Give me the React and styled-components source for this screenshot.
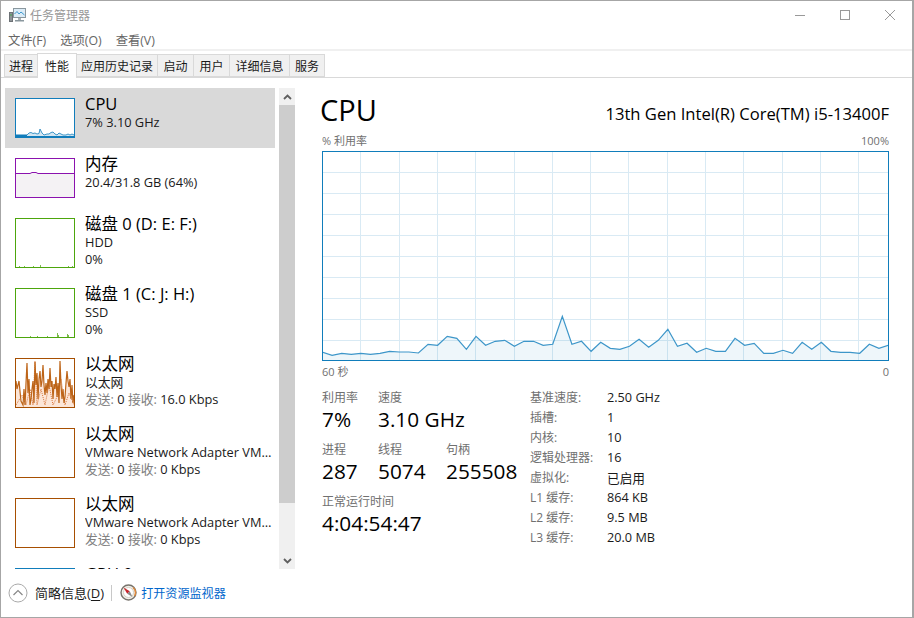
import React from 'react'
import styled, { createGlobalStyle } from 'styled-components'

const FONT = '"Open Sans", "Noto Sans CJK SC", sans-serif'

const GlobalStyle = createGlobalStyle`
    html, body {
        margin: 0;
        padding: 0;
        background: #fff;
    }
    * {
        box-sizing: border-box;
    }
`

const Window = styled.div`
    width: 914px;
    height: 618px;
    border: 1px solid #a6a6a6;
    border-right-width: 2px;
    background: #fff;
    font-family: ${FONT};
    font-size: 12px;
    color: #1a1a1a;
    display: flex;
    flex-direction: column;
    overflow: hidden;
`

const TitleBar = styled.div`
    height: 29px;
    flex: none;
    display: flex;
    align-items: center;
    padding: 0 0 1px 8px;
    gap: 4px;
`

const TitleText = styled.span`
    color: #999;
    font-size: 12px;
    margin-bottom: 1px;
`

const WindowButtons = styled.div`
    margin-left: auto;
    display: flex;
    align-items: center;
    height: 100%;
`

const WindowButton = styled.div`
    width: 45px;
    height: 100%;
    display: flex;
    align-items: center;
    justify-content: center;
    color: #999;
`

const MenuBar = styled.div`
    height: 19px;
    flex: none;
    display: flex;
    align-items: center;
    padding-left: 7px;
    gap: 14px;
`

const MenuItem = styled.span`
    color: #666;
    font-size: 12.3px;
`

const Separator = styled.div`
    height: 2px;
    flex: none;
    background: #f0f0f0;
`

const TabBar = styled.div`
    height: 27px;
    flex: none;
    display: flex;
    align-items: flex-end;
    padding-left: 3px;
    border-bottom: 1px solid #d9d9d9;
`

const Tab = styled.div`
    width: ${p => p.$w}px;
    height: ${p => (p.$active ? '25px' : '23px')};
    margin-bottom: ${p => (p.$active ? '-1px' : '0')};
    margin-left: -1px;
    border: 1px solid #d9d9d9;
    border-bottom: ${p => (p.$active ? '0' : '1px solid #d9d9d9')};
    background: ${p => (p.$active ? '#fff' : '#f0f0f0')};
    position: relative;
    z-index: ${p => (p.$active ? 1 : 0)};
    display: flex;
    align-items: center;
    justify-content: center;
    font-size: 12px;
    color: #1a1a1a;
    &:first-child {
        margin-left: 0;
    }
`

const Body = styled.div`
    flex: 1;
    min-height: 0;
    display: flex;
`

const SideColumn = styled.div`
    width: 294px;
    flex: none;
    display: flex;
    gap: 4px;
    padding: 10px 0 1px 4px;
`

const SideList = styled.div`
    width: 270px;
    flex: none;
    overflow: hidden;
`

const SideItem = styled.div`
    display: flex;
    gap: 10px;
    padding: 10px 2px 10px 10px;
    background: ${p => (p.$selected ? '#d9d9d9' : 'transparent')};
`

const Thumb = styled.div`
    width: 60px;
    height: ${p => p.$h}px;
    flex: none;
    border: 1px solid ${p => p.$color};
    background: #fff;
    overflow: hidden;
    svg {
        display: block;
    }
`

const ItemText = styled.div`
    flex: 1;
    min-width: 0;
    margin-top: -4px;
`

const ItemTitle = styled.div`
    font-size: 16.5px;
    line-height: 20px;
    color: #000;
    white-space: nowrap;
`

const ItemLine = styled.div`
    font-size: 12.8px;
    line-height: 17px;
    color: #1a1a1a;
    white-space: nowrap;
    overflow: hidden;
    text-overflow: ellipsis;
`

const Muted = styled.span`
    color: #808080;
`

const ScrollBar = styled.div`
    width: 16px;
    flex: none;
    background: #f0f0f0;
    display: flex;
    flex-direction: column;
`

const ScrollArrow = styled.div`
    height: 17px;
    flex: none;
    display: flex;
    align-items: center;
    justify-content: center;
    margin-top: ${p => (p.$bottom ? 'auto' : '0')};
`

const ScrollThumb = styled.div`
    height: 398px;
    flex: none;
    background: #cdcdcd;
`

const Main = styled.div`
    width: 567px;
    margin-left: 27px;
    padding-top: 14px;
    flex: none;
`

const Heading = styled.div`
    height: 40px;
    display: flex;
    align-items: flex-start;
    justify-content: space-between;
`

const HeadingTitle = styled.div`
    font-size: 29px;
    line-height: 36px;
    color: #000;
    margin-left: -2px;
`

const CpuName = styled.div`
    font-size: 16.6px;
    line-height: 20px;
    margin-top: 12px;
    color: #000;
`

const AxisRow = styled.div`
    display: flex;
    justify-content: space-between;
    font-size: 11px;
    line-height: 17px;
    color: #707070;
`

const ChartBox = styled.div`
    width: 567px;
    height: 210px;
    margin: 2px 0 2px;
    border: 1px solid #117dbb;
    svg {
        display: block;
    }
`

const Details = styled.div`
    display: flex;
    margin-top: 9px;
`

const StatColumn = styled.div`
    width: 208px;
    flex: none;
`

const StatRow = styled.div`
    display: flex;
    height: 52px;
`

const Stat = styled.div`
    width: ${p => p.$w || 68}px;
    flex: none;
    white-space: nowrap;
`

const StatLabel = styled.div`
    font-size: 12px;
    line-height: 17px;
    color: #707070;
`

const StatValue = styled.div`
    font-size: 20.8px;
    line-height: 26px;
    color: #000;
`

const SpecGrid = styled.div`
    display: grid;
    grid-template-columns: 77px auto;
    grid-auto-rows: 20px;
    align-content: start;
    align-items: center;
    margin-top: -2px;
`

const SpecLabel = styled.div`
    font-size: 12px;
    color: #707070;
`

const SpecValue = styled.div`
    font-size: 12.7px;
    color: #1a1a1a;
`

const Footer = styled.div`
    height: 47px;
    flex: none;
    display: flex;
    align-items: center;
    padding: 0 0 2px 7px;
`

const Fewer = styled.span`
    font-size: 13px;
    color: #1a1a1a;
    margin-left: 7px;
    u {
        text-underline-offset: 2px;
    }
`

const FooterDivider = styled.div`
    width: 1px;
    height: 16px;
    background: #c8c8c8;
    margin: 0 8px 0 7px;
`

const MonitorLink = styled.a`
    font-size: 12.1px;
    color: #0066cc;
    margin-left: 4px;
`

const cpuChartZ = [
    187, 196, 190, 193, 190, 193, 190, 184, 186, 186, 189, 163, 166, 139, 145, 178, 139, 166, 154, 151,
    169, 154, 154, 166, 163, 79, 163, 154, 184, 157, 175, 178, 169, 148, 172, 151, 118, 169, 160, 187,
    175, 184, 184, 145, 166, 160, 190, 190, 181, 190, 157, 178, 157, 184, 187, 187, 190, 163, 175, 166,
]

const cpuPoints = cpuChartZ
    .map((z, i) => `${(i * 566) / 59 + 0.5},${(290 + z / 3 - 151).toFixed(1)}`)
    .join(' ')

const CpuChart = () => (
    <svg width="565" height="208" viewBox="1 1 565 208">
        {[...Array(14)].map((_, i) => {
            const x = Math.round(38.3 * (i + 1)) + 0.5
            return <line key={i} x1={x} x2={x} y1="0" y2="210" stroke="#d9eaf4" />
        })}
        {[...Array(9)].map((_, i) => {
            const y = 21 * (i + 1) + 0.5
            return <line key={i} x1="0" x2="567" y1={y} y2={y} stroke="#d9eaf4" />
        })}
        <polygon points={`0.5,210 ${cpuPoints} 566.5,210`} fill="#117dbb" fillOpacity="0.07" />
        <polyline points={cpuPoints} fill="none" stroke="#3d96c9" strokeWidth="1.2" />
    </svg>
)

const cpuThumbLine =
    '0,37 10,37 11,36 13,34 15,33.5 17,34.5 19,34 21,35 23,34.5 24,30 26,34 28,36 31,35 33,35 35,33.5 37,33 39,35 41,36 43,34 45,35 47,36 50,36 52,35 54,36 56,35 58,36'

const CpuThumb = () => (
    <svg width="58" height="38" viewBox="0 0 58 38">
        <polygon points={`0,38 ${cpuThumbLine} 58,38`} fill="#d3e6f2" />
        <polyline points={cpuThumbLine} fill="none" stroke="#3d96c9" />
        <rect x="0" y="35.5" width="11" height="2.5" fill="#117dbb" />
        <rect x="11" y="37" width="47" height="1" fill="#117dbb" />
    </svg>
)

const MemoryThumb = () => (
    <svg width="58" height="38" viewBox="0 0 58 38">
        <polygon points="0,14.5 14,14.5 16,13.5 20,13.5 22,14.5 58,14.5 58,38 0,38" fill="#f4f2f4" />
        <polyline points="0,14.5 14,14.5 16,13.5 20,13.5 22,14.5 58,14.5" fill="none" stroke="#8b12ae" />
    </svg>
)

const DiskThumb = ({ ticks }) => (
    <svg width="58" height="48" viewBox="0 0 58 48">
        {ticks.map(([x, h]) => (
            <rect key={x} x={x} y={48 - h} width="1" height={h} fill="#7dbb4d" />
        ))}
    </svg>
)

const ethLine =
    '0,22 1,30 3,22 5,42 7,46 8,30 9,46 10,24 11,4 12,34 13,20 14,46 15,40 16,30 17,22 18,44 19,3 20,26 21,14 22,40 23,20 24,12 25,28 26,22 27,6 28,26 29,36 30,24 31,34 32,20 33,30 34,9 35,28 36,22 37,40 38,25 39,30 40,18 41,38 42,24 43,44 44,2 45,26 46,40 47,30 48,44 49,38 50,24 51,12 52,22 53,28 54,20 55,40 56,26 57,44 58,36'

const ethDots =
    '0,46 6,36 10,46 14,30 17,46 19,2 21,46 25,30 29,46 33,26 37,46 41,38 45,20 49,46 53,34 58,46'

const EthThumb = () => (
    <svg width="58" height="48" viewBox="0 0 58 48">
        <polygon points={`0,48 ${ethLine} 58,48`} fill="#fce6d8" />
        <polyline points={ethDots} fill="none" stroke="#d9763a" strokeWidth="1" strokeDasharray="1 1" />
        <polyline points={ethLine} fill="none" stroke="#bd6418" strokeWidth="1.2" />
    </svg>
)

const AppIcon = () => (
    <svg width="17" height="16" viewBox="0 0 17 16">
        <rect x="4.5" y="1.5" width="12" height="9" fill="#dcecf7" stroke="#8a979e" />
        <polyline points="5.5,7 8,4.5 10,7 12,5 15.5,8" fill="none" stroke="#3f9ad0" />
        <rect x="0.5" y="5.5" width="3" height="9" fill="#8f9599" stroke="#6d7276" />
        <rect x="1.5" y="7" width="1" height="2" fill="#3fa04a" />
        <rect x="9" y="11" width="3" height="2" fill="#aab2b7" />
        <rect x="6" y="13" width="9" height="1.5" fill="#8a979e" />
    </svg>
)

const Chevron = ({ up }) => (
    <svg width="9" height="6" viewBox="0 0 9 6">
        <polyline
            points={up ? '1,5 4.5,1.5 8,5' : '1,1 4.5,4.5 8,1'}
            fill="none"
            stroke="#5f5f5f"
            strokeWidth="1.8"
        />
    </svg>
)

const FewerIcon = () => (
    <svg width="20" height="20" viewBox="0 0 20 20">
        <circle cx="10" cy="10" r="9" fill="#fff" stroke="#aaa" />
        <polyline points="5.5,12 10,7.5 14.5,12" fill="none" stroke="#888" strokeWidth="1.2" />
    </svg>
)

const MonitorIcon = () => (
    <svg width="17" height="17" viewBox="0 0 17 17">
        <circle cx="8.5" cy="8.5" r="7.5" fill="#f2efe8" stroke="#77736c" strokeWidth="1.4" />
        <path d="M13 3.5A7 7 0 0 1 14.5 12" fill="none" stroke="#e08a3c" strokeWidth="1.4" />
        <circle cx="8.5" cy="8.5" r="5" fill="#fff" stroke="#d5d0c4" />
        <polygon points="3.5,3.5 9.8,7.2 7.2,9.8" fill="#c8242b" />
        <polygon points="12.5,13 7.2,9.8 9.8,7.2" fill="#8a8a8a" />
    </svg>
)

const tabs = [
    ['进程', 34],
    ['性能', 40],
    ['应用历史记录', 82],
    ['启动', 37],
    ['用户', 37],
    ['详细信息', 61],
    ['服务', 36],
]

const specs = [
    ['基准速度:', '2.50 GHz'],
    ['插槽:', '1'],
    ['内核:', '10'],
    ['逻辑处理器:', '16'],
    ['虚拟化:', '已启用'],
    ['L1 缓存:', '864 KB'],
    ['L2 缓存:', '9.5 MB'],
    ['L3 缓存:', '20.0 MB'],
]

const App = () => {
    return (
        <Window>
            <GlobalStyle />
            <TitleBar>
                <AppIcon />
                <TitleText>任务管理器</TitleText>
                <WindowButtons>
                    <WindowButton>
                        <svg width="10" height="10" viewBox="0 0 10 10">
                            <line x1="0" x2="10" y1="5.5" y2="5.5" stroke="currentColor" />
                        </svg>
                    </WindowButton>
                    <WindowButton>
                        <svg width="10" height="10" viewBox="0 0 10 10">
                            <rect x="0.5" y="0.5" width="9" height="9" fill="none" stroke="currentColor" />
                        </svg>
                    </WindowButton>
                    <WindowButton>
                        <svg width="10" height="10" viewBox="0 0 10 10">
                            <path d="M0 0L10 10M10 0L0 10" fill="none" stroke="currentColor" />
                        </svg>
                    </WindowButton>
                </WindowButtons>
            </TitleBar>
            <MenuBar>
                <MenuItem>文件(F)</MenuItem>
                <MenuItem>选项(O)</MenuItem>
                <MenuItem>查看(V)</MenuItem>
            </MenuBar>
            <Separator />
            <TabBar>
                {tabs.map(([t, w]) => (
                    <Tab key={t} $w={w} $active={t === '性能'}>{t}</Tab>
                ))}
            </TabBar>
            <Body>
                <SideColumn>
                    <SideList>
                        <SideItem $selected>
                            <Thumb $color="#117dbb" $h={40}><CpuThumb /></Thumb>
                            <ItemText>
                                <ItemTitle>CPU</ItemTitle>
                                <ItemLine>7% 3.10 GHz</ItemLine>
                            </ItemText>
                        </SideItem>
                        <SideItem>
                            <Thumb $color="#8b12ae" $h={40}><MemoryThumb /></Thumb>
                            <ItemText>
                                <ItemTitle>内存</ItemTitle>
                                <ItemLine>20.4/31.8 GB (64%)</ItemLine>
                            </ItemText>
                        </SideItem>
                        <SideItem>
                            <Thumb $color="#4da60c" $h={50}>
                                <DiskThumb ticks={[[3, 1], [8, 1], [17, 1], [24, 2], [52, 1], [56, 1]]} />
                            </Thumb>
                            <ItemText>
                                <ItemTitle>磁盘 0 (D: E: F:)</ItemTitle>
                                <ItemLine>HDD</ItemLine>
                                <ItemLine>0%</ItemLine>
                            </ItemText>
                        </SideItem>
                        <SideItem>
                            <Thumb $color="#4da60c" $h={50}>
                                <DiskThumb ticks={[[14, 1], [21, 1], [31, 1], [41, 4], [42, 2], [51, 3], [52, 2]]} />
                            </Thumb>
                            <ItemText>
                                <ItemTitle>磁盘 1 (C: J: H:)</ItemTitle>
                                <ItemLine>SSD</ItemLine>
                                <ItemLine>0%</ItemLine>
                            </ItemText>
                        </SideItem>
                        <SideItem>
                            <Thumb $color="#a74f01" $h={50}><EthThumb /></Thumb>
                            <ItemText>
                                <ItemTitle>以太网</ItemTitle>
                                <ItemLine>以太网</ItemLine>
                                <ItemLine><Muted>发送:</Muted> 0 <Muted>接收:</Muted> 16.0 Kbps</ItemLine>
                            </ItemText>
                        </SideItem>
                        <SideItem>
                            <Thumb $color="#a74f01" $h={50} />
                            <ItemText>
                                <ItemTitle>以太网</ItemTitle>
                                <ItemLine>VMware Network Adapter VMnet1</ItemLine>
                                <ItemLine><Muted>发送:</Muted> 0 <Muted>接收:</Muted> 0 Kbps</ItemLine>
                            </ItemText>
                        </SideItem>
                        <SideItem>
                            <Thumb $color="#a74f01" $h={50} />
                            <ItemText>
                                <ItemTitle>以太网</ItemTitle>
                                <ItemLine>VMware Network Adapter VMnet8</ItemLine>
                                <ItemLine><Muted>发送:</Muted> 0 <Muted>接收:</Muted> 0 Kbps</ItemLine>
                            </ItemText>
                        </SideItem>
                        <SideItem>
                            <Thumb $color="#117dbb" $h={50} />
                            <ItemText>
                                <ItemTitle>GPU 0</ItemTitle>
                            </ItemText>
                        </SideItem>
                    </SideList>
                    <ScrollBar>
                        <ScrollArrow><Chevron up /></ScrollArrow>
                        <ScrollThumb />
                        <ScrollArrow $bottom><Chevron /></ScrollArrow>
                    </ScrollBar>
                </SideColumn>
                <Main>
                    <Heading>
                        <HeadingTitle>CPU</HeadingTitle>
                        <CpuName>13th Gen Intel(R) Core(TM) i5-13400F</CpuName>
                    </Heading>
                    <AxisRow>
                        <span>% 利用率</span>
                        <span>100%</span>
                    </AxisRow>
                    <ChartBox><CpuChart /></ChartBox>
                    <AxisRow>
                        <span>60 秒</span>
                        <span>0</span>
                    </AxisRow>
                    <Details>
                        <StatColumn>
                            <StatRow>
                                <Stat $w={56}>
                                    <StatLabel>利用率</StatLabel>
                                    <StatValue>7%</StatValue>
                                </Stat>
                                <Stat>
                                    <StatLabel>速度</StatLabel>
                                    <StatValue>3.10 GHz</StatValue>
                                </Stat>
                            </StatRow>
                            <StatRow>
                                <Stat $w={56}>
                                    <StatLabel>进程</StatLabel>
                                    <StatValue>287</StatValue>
                                </Stat>
                                <Stat>
                                    <StatLabel>线程</StatLabel>
                                    <StatValue>5074</StatValue>
                                </Stat>
                                <Stat>
                                    <StatLabel>句柄</StatLabel>
                                    <StatValue>255508</StatValue>
                                </Stat>
                            </StatRow>
                            <StatRow>
                                <Stat $w={200}>
                                    <StatLabel>正常运行时间</StatLabel>
                                    <StatValue>4:04:54:47</StatValue>
                                </Stat>
                            </StatRow>
                        </StatColumn>
                        <SpecGrid>
                            {specs.map(([label, value]) => (
                                <React.Fragment key={label}>
                                    <SpecLabel>{label}</SpecLabel>
                                    <SpecValue>{value}</SpecValue>
                                </React.Fragment>
                            ))}
                        </SpecGrid>
                    </Details>
                </Main>
            </Body>
            <Footer>
                <FewerIcon />
                <Fewer>简略信息(<u>D</u>)</Fewer>
                <FooterDivider />
                <MonitorIcon />
                <MonitorLink>打开资源监视器</MonitorLink>
            </Footer>
        </Window>
    )
}

export default App
